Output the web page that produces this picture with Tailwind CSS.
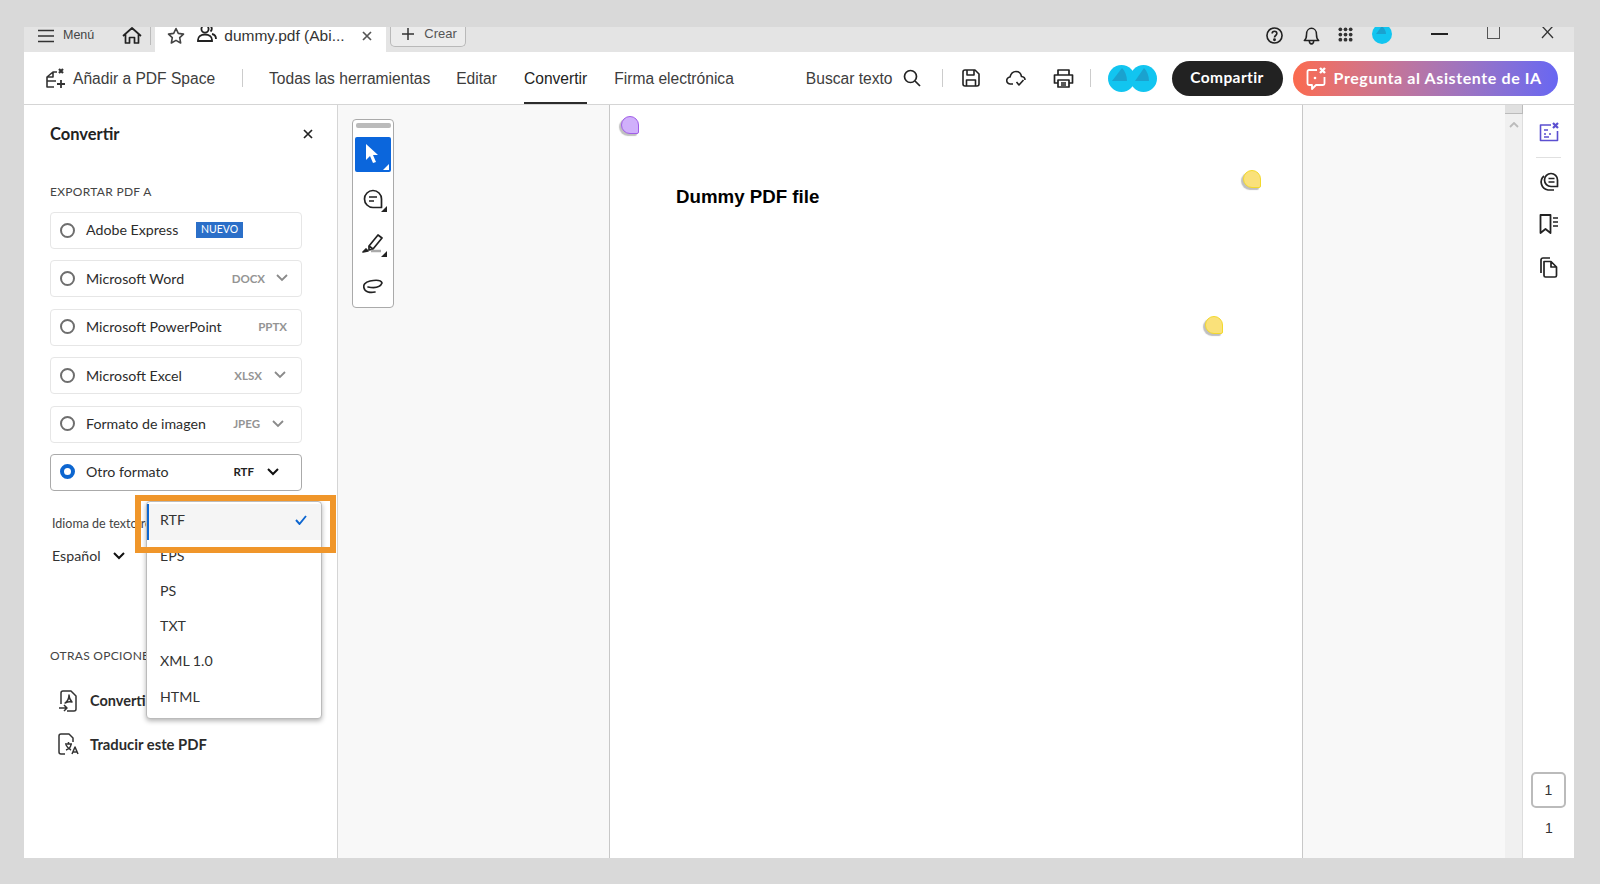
<!DOCTYPE html>
<html lang="es">
<head>
    <meta charset="UTF-8">
    <title>dummy.pdf - Convertir</title>
    <script src="https://cdn.jsdelivr.net/npm/@tailwindcss/browser@4"></script>
</head>
<body class="bg-[#d9d9d9] h-[884px] w-[1600px] overflow-hidden font-['Liberation_Sans',sans-serif] text-[#2c2c2c]">
    <div class="ml-[24px] mt-[27px] w-[1550px] h-[831px] flex flex-col bg-white absolute">

        <!-- Tab strip -->
        <div class="h-[25px] shrink-0 bg-[#e4e4e4] flex items-center overflow-hidden relative pb-[8px]">
            <svg class="ml-[14px] w-[16px] h-[14px]" viewBox="0 0 16 14" fill="none" stroke="#333" stroke-width="1.6"><path d="M0 1.5h16M0 7h16M0 12.5h16"/></svg>
            <span class="ml-[9px] text-[12.500px] text-[#444]">Menú</span>
            <svg class="ml-[28px] w-[20px] h-[19px]" viewBox="0 0 20 19" fill="none" stroke="#222" stroke-width="1.7" stroke-linejoin="round"><path d="M1 10 10 2l9 8M3.500 8.500V17H7.500v-5.500h5V17h4V8.500"/></svg>
            <div class="self-start ml-[8px] w-[1px] h-[18px] bg-[#bbb]"></div>
            <div class="self-start ml-[4px] w-[231px] h-[25px] pb-[8px] bg-white flex items-center">
                <svg class="ml-[12px] w-[18px] h-[18px]" viewBox="0 0 18 18" fill="none" stroke="#444" stroke-width="1.6" stroke-linejoin="round"><path d="m9 1.500 2.300 4.900 5.200.7-3.800 3.600.950 5.300L9 13.400l-4.650 2.600.950-5.300L1.500 7.100l5.200-.7z"/></svg>
                <svg class="ml-[12px] w-[20px] h-[20px] -mt-[3px]" viewBox="0 0 20 20" fill="none" stroke="#222" stroke-width="1.8"><circle cx="8" cy="5" r="3.600"/><path d="M1 16c0-3.500 3-5.500 7-5.500s7 2 7 5.500v1H1zM13 2c2 .5 2.500 4 .5 5.500M15 10c2.500.5 4 2 4 5"/></svg>
                <span class="ml-[7px] text-[15.500px] text-[#333] whitespace-nowrap">dummy.pdf (Abi...</span>
                <svg class="ml-[17px] w-[10px] h-[10px]" viewBox="0 0 10 10" stroke="#555" stroke-width="1.700"><path d="m1 1 8 8M9 1 1 9"/></svg>
            </div>
            <div class="self-start ml-[4px] w-[76px] h-[20px] pb-[5px] border border-t-0 border-[#b9b9b9] rounded-b-[5px] flex items-center bg-[#ececec]">
                <svg class="ml-[11px] w-[12px] h-[12px]" viewBox="0 0 12 12" stroke="#333" stroke-width="1.500"><path d="M6 0v12M0 6h12"/></svg>
                <span class="ml-[10px] text-[13px] text-[#555]">Crear</span>
            </div>
            <div class="self-start ml-auto relative h-[25px] w-[330px]">
                <svg class="absolute left-[22px] top-0 w-[17px] h-[17px]" viewBox="0 0 18 18" fill="none" stroke="#222" stroke-width="1.700"><circle cx="9" cy="9" r="8"/><path d="M6.500 7c0-3.300 5-3.300 5 0 0 2-2.500 2-2.500 4"/><circle cx="9" cy="13.500" r=".7" fill="#222"/></svg>
                <svg class="absolute left-[59px] top-0 w-[17px] h-[18px]" viewBox="0 0 18 20" fill="none" stroke="#222" stroke-width="1.700" stroke-linejoin="round"><path d="M1 15c2-1.500 2.500-3 2.500-7S6 1.500 9 1.500 14.500 4 14.500 8 15 13.500 17 15zM6.500 15c0 5 5 5 5 0"/></svg>
                <svg class="absolute left-[94px] top-0 w-[15px] h-[15px]" viewBox="0 0 16 16" fill="#333"><circle cx="2.500" cy="2.500" r="2"/><circle cx="8" cy="2.500" r="2"/><circle cx="13.500" cy="2.500" r="2"/><circle cx="2.500" cy="8" r="2"/><circle cx="8" cy="8" r="2"/><circle cx="13.500" cy="8" r="2"/><circle cx="2.500" cy="13.500" r="2"/><circle cx="8" cy="13.500" r="2"/><circle cx="13.500" cy="13.500" r="2"/></svg>
                <svg class="absolute left-[128px] -top-[3px] w-[20px] h-[20px]" viewBox="0 0 20 20"><circle cx="10" cy="10" r="10" fill="#12c5f0"/><path d="M4 10 10 2c2 2 4 5 4 8z" fill="#1aa2cf"/></svg>
                <div class="absolute left-[187px] top-[6px] w-[17px] h-[2px] bg-[#222]"></div>
                <div class="absolute left-[243px] top-0 w-[13px] h-[12px] border border-[#555] border-t-0"></div>
                <svg class="absolute left-[297px] -top-[1px] w-[13px] h-[13px]" viewBox="0 0 13 13" stroke="#333" stroke-width="1.300"><path d="m1 0 11 12M12 0 1 12"/></svg>
            </div>
        </div>

        <!-- Toolbar -->
        <div class="h-[53px] shrink-0 flex items-center border-b border-[#d5d5d5] relative text-[15.600px] text-[#3d3d3d]">
            <svg class="ml-[21px] w-[21px] h-[21px]" viewBox="0 0 21 21" fill="none" stroke="#333" stroke-width="1.600" stroke-linejoin="round"><path d="M9 19H2V9l6-5h4M2 13h9M8 4v5H2"/><path d="m14 1 4 4M18 1l-4 4" stroke-width="2.200"/><path d="M16 12v8M12 16h8" stroke-width="1.800"/></svg>
            <span class="ml-[7px] w-[169px] pt-[1px] whitespace-nowrap">Añadir a PDF Space</span>
            <div class="w-[1px] h-[18px] bg-[#ccc]"></div>
            <span class="ml-[26px] pt-[1px] whitespace-nowrap">Todas las herramientas</span>
            <span class="ml-[26px] pt-[1px]">Editar</span>
            <span class="ml-[27px] h-full flex items-center border-b-[2px] border-[#2c2c2c] pt-[3px] text-[#222]">Convertir</span>
            <span class="ml-[27px] pt-[1px] whitespace-nowrap">Firma electrónica</span>
            <span class="ml-[72px] pt-[1px] whitespace-nowrap">Buscar texto</span>
            <svg class="ml-[10px] w-[18px] h-[18px]" viewBox="0 0 18 18" fill="none" stroke="#222" stroke-width="1.700"><circle cx="7.500" cy="7.500" r="6"/><path d="m12 12 5 5"/></svg>
            <div class="ml-[21px] w-[1px] h-[18px] bg-[#ccc]"></div>
            <svg class="ml-[19px] w-[18px] h-[18px]" viewBox="0 0 18 18" fill="none" stroke="#222" stroke-width="1.600" stroke-linejoin="round"><path d="M3 1h10l4 4v10a2 2 0 0 1-2 2H3a2 2 0 0 1-2-2V3a2 2 0 0 1 2-2z"/><path d="M5 1v5h7V1M4.500 17v-6h9v6"/></svg>
            <svg class="ml-[26px] w-[20px] h-[17px]" viewBox="0 0 20 17" fill="none" stroke="#222" stroke-width="1.600" stroke-linejoin="round"><path d="M7 14H4.500a3.500 3.500 0 0 1-.5-7C5 3 7.500 1.500 10 1.500c3 0 5 2 5.500 5 2 .2 3.500 1.500 3.500 3.500"/><path d="m10.500 12 2.500 3 4.500-5"/></svg>
            <svg class="ml-[27px] w-[21px] h-[19px]" viewBox="0 0 21 19" fill="none" stroke="#222" stroke-width="1.700" stroke-linejoin="round"><path d="M5 6V1h11v5M5 14H1.500V6h18v8H16M5 11h11v7H5zM8 14h5M8 16h5"/></svg>
            <div class="ml-[16px] w-[1px] h-[18px] bg-[#ccc]"></div>
            <div class="ml-[17px] flex">
                <svg class="w-[27px] h-[27px]" viewBox="0 0 27 27"><circle cx="13.500" cy="13.500" r="13.500" fill="#12c5f0"/><path d="M4 16 14 3c3 3 5 8 5 13z" fill="#1aa2cf"/></svg>
                <svg class="w-[27px] h-[27px] -ml-[5px]" viewBox="0 0 27 27"><circle cx="13.500" cy="13.500" r="13.500" fill="#12c5f0"/><path d="M5 16 14 3c3 3 5 8 5 13z" fill="#1aa2cf"/></svg>
            </div>
            <div class="ml-[15px] w-[111px] h-[35px] rounded-full bg-[#222] text-white font-['Lato',sans-serif] font-bold text-[15.500px] tracking-[.4px] flex items-center justify-center pb-[1px]">Compartir</div>
            <div class="ml-[10px] w-[265px] h-[35px] rounded-full bg-gradient-to-r from-[#fb6a4d] to-[#6866f2] text-white font-['Lato',sans-serif] font-bold text-[16px] tracking-[.6px] flex items-center">
                <svg class="ml-[13px] w-[22px] h-[23px]" viewBox="0 0 22 23" fill="none" stroke="#fff" stroke-width="1.800" stroke-linejoin="round"><path d="M11 3H3a1.500 1.500 0 0 0-1.500 1.500v12A1.500 1.500 0 0 0 3 18h3v4l4-4h7a1.500 1.500 0 0 0 1.500-1.500V10"/><path d="m14 1 5 5M19 1l-5 5" stroke-width="2.400"/><circle cx="9" cy="11" r="1.300" fill="#fff" stroke="none"/></svg>
                <span class="ml-[6px] whitespace-nowrap">Pregunta al Asistente de IA</span>
            </div>
        </div>

        <div class="flex-1 flex min-h-0">
            <!-- Convert panel -->
            <aside class="w-[314px] shrink-0 border-r border-[#d5d5d5] relative font-['Lato',sans-serif] text-[14.200px] px-[26px] text-[#2c2c2c]">
                <div class="h-[58px] flex items-center justify-between">
                    <span class="font-bold text-[16.500px] text-[#222]">Convertir</span>
                    <svg class="mr-[-2px] w-[10px] h-[10px]" viewBox="0 0 10 10" stroke="#222" stroke-width="1.700"><path d="m1 1 8 8M9 1 1 9"/></svg>
                </div>
                <div class="mt-[20px] text-[12px] tracking-[.3px] text-[#444] h-[18px] flex items-center">EXPORTAR PDF A</div>
                <div class="mt-[11px] w-[252px] flex flex-col gap-[11.400px]">
                    <div class="h-[37px] pb-[1px] border border-[#e6e6e6] rounded-[4px] flex items-center">
                        <div class="ml-[9px] w-[15px] h-[15px] rounded-full border-2 border-[#6e6e6e]"></div>
                        <span class="ml-[11px]">Adobe Express</span>
                        <span class="ml-auto mr-[58px] w-[47px] h-[16px] bg-[#2b6fc8] text-white text-[10.500px] flex items-center justify-center">NUEVO</span>
                    </div>
                    <div class="h-[37px] pb-[1px] border border-[#e6e6e6] rounded-[4px] flex items-center">
                        <div class="ml-[9px] w-[15px] h-[15px] rounded-full border-2 border-[#6e6e6e]"></div>
                        <span class="ml-[11px]">Microsoft Word</span>
                        <span class="ml-auto text-[11.500px] font-bold text-[#949494]">DOCX</span>
                        <svg class="ml-[11px] mr-[13px] w-[12px] h-[8px]" viewBox="0 0 12 8" fill="none" stroke="#8a8a8a" stroke-width="1.800"><path d="m1 1 5 5 5-5"/></svg>
                    </div>
                    <div class="h-[37px] pb-[1px] border border-[#e6e6e6] rounded-[4px] flex items-center">
                        <div class="ml-[9px] w-[15px] h-[15px] rounded-full border-2 border-[#6e6e6e]"></div>
                        <span class="ml-[11px]">Microsoft PowerPoint</span>
                        <span class="ml-auto mr-[14px] text-[11.500px] font-bold text-[#949494]">PPTX</span>
                    </div>
                    <div class="h-[37px] pb-[1px] border border-[#e6e6e6] rounded-[4px] flex items-center">
                        <div class="ml-[9px] w-[15px] h-[15px] rounded-full border-2 border-[#6e6e6e]"></div>
                        <span class="ml-[11px]">Microsoft Excel</span>
                        <span class="ml-auto text-[11.500px] font-bold text-[#949494]">XLSX</span>
                        <svg class="ml-[12px] mr-[15px] w-[12px] h-[8px]" viewBox="0 0 12 8" fill="none" stroke="#8a8a8a" stroke-width="1.800"><path d="m1 1 5 5 5-5"/></svg>
                    </div>
                    <div class="h-[37px] pb-[1px] border border-[#e6e6e6] rounded-[4px] flex items-center">
                        <div class="ml-[9px] w-[15px] h-[15px] rounded-full border-2 border-[#6e6e6e]"></div>
                        <span class="ml-[11px]">Formato de imagen</span>
                        <span class="ml-auto text-[11.500px] font-bold text-[#949494]">JPEG</span>
                        <svg class="ml-[12px] mr-[17px] w-[12px] h-[8px]" viewBox="0 0 12 8" fill="none" stroke="#8a8a8a" stroke-width="1.800"><path d="m1 1 5 5 5-5"/></svg>
                    </div>
                    <div class="h-[37px] pb-[1px] border border-[#aaa] rounded-[4px] flex items-center">
                        <div class="ml-[9px] w-[15px] h-[15px] rounded-full border-[4px] border-[#0d66d0]"></div>
                        <span class="ml-[11px]">Otro formato</span>
                        <span class="ml-auto text-[11.500px] font-bold text-[#222]">RTF</span>
                        <svg class="ml-[13px] mr-[22px] w-[12px] h-[8px]" viewBox="0 0 12 8" fill="none" stroke="#111" stroke-width="2"><path d="m1 1 5 5 5-5"/></svg>
                    </div>
                </div>
                <div class="mt-[24px] ml-[2px] text-[12.500px] text-[#444] h-[18px] flex items-center whitespace-nowrap">Idioma de texto reconocido</div>
                <div class="mt-[13px] ml-[2px] flex items-center h-[20px]">
                    <span class="text-[#333]">Español</span>
                    <svg class="ml-[12px] w-[12px] h-[8px]" viewBox="0 0 12 8" fill="none" stroke="#111" stroke-width="2"><path d="m1 1 5 5 5-5"/></svg>
                </div>
                <div class="mt-[81px] text-[12px] tracking-[.3px] text-[#444] h-[18px] flex items-center whitespace-nowrap">OTRAS OPCIONES DE CONVERSIÓN</div>
                <div class="mt-[25px] ml-[8px] h-[22px] flex items-center font-bold text-[14.500px]">
                    <svg class="w-[20px] h-[22px]" viewBox="0 0 20 22" fill="none" stroke="#333" stroke-width="1.500" stroke-linejoin="round"><path d="M3 14V3a2 2 0 0 1 2-2h8l5 5v13a2 2 0 0 1-2 2H9M1 18h8M6 15l3 3-3 3M7 13c3-2 4-4 4-8 0 3 1 5 3 7-2-.500-5 0-7 1z"/></svg>
                    <span class="ml-[12px] whitespace-nowrap">Convertir a PDF</span>
                </div>
                <div class="mt-[21px] ml-[8px] h-[22px] flex items-center font-bold text-[14.800px]">
                    <svg class="w-[22px] h-[22px]" viewBox="0 0 22 22" fill="none" stroke="#333" stroke-width="1.500" stroke-linejoin="round"><path d="M7 21H3a2 2 0 0 1-2-2V3a2 2 0 0 1 2-2h8l4 4v4M7 11h7M10.500 9v2M8 17c3-1 5-3 5-6M8 12c1 2 3 4 5 5M14 21l3-7 3 7M15 19h4"/></svg>
                    <span class="ml-[10px] whitespace-nowrap">Traducir este PDF</span>
                </div>

                <!-- Format dropdown -->
                <div class="absolute left-[122px] top-[396px] w-[176px] h-[218px] bg-white border border-[#bbb] rounded-[4px] shadow-[0_2px_5px_rgba(0,0,0,.3)] pt-[2px] text-[#333]">
                    <div class="h-[36px] pb-[5px] bg-[#f5f5f5] border-l-[2px] border-[#0d66d0] flex items-center pl-[11px] justify-between pr-[14px]">
                        <span>RTF</span>
                        <svg class="w-[12px] h-[10px]" viewBox="0 0 12 10" fill="none" stroke="#0d66d0" stroke-width="1.900"><path d="m1 5 3.500 4L11 1"/></svg>
                    </div>
                    <div class="h-[35.300px] pb-[5px] flex items-center pl-[13px]">EPS</div>
                    <div class="h-[35.300px] pb-[5px] flex items-center pl-[13px]">PS</div>
                    <div class="h-[35.300px] pb-[5px] flex items-center pl-[13px]">TXT</div>
                    <div class="h-[35.300px] pb-[5px] flex items-center pl-[13px]">XML 1.0</div>
                    <div class="h-[35.300px] pb-[5px] flex items-center pl-[13px]">HTML</div>
                </div>
                <!-- Orange callout -->
                <div class="absolute left-[111px] top-[390px] w-[201px] h-[58px] border-[6px] border-[#f0962a]"></div>
            </aside>

            <!-- Canvas -->
            <main class="flex-1 flex bg-[#f8f8f8] relative min-w-0">
                <div class="w-[272px] shrink-0 pl-[14px] pt-[14px] border-r border-[#c8c8c8]">
                    <div class="w-[42px] h-[189px] bg-white border border-[#aaa] rounded-[4px] flex flex-col items-center">
                        <div class="mt-[3px] w-[35px] h-[5px] rounded-[2px] bg-[#bbb]"></div>
                        <div class="mt-[9px] w-[36px] h-[35px] rounded-[2px] bg-[#0b66dc] relative flex items-center justify-center">
                            <svg class="w-[14px] h-[21px] -mt-[2px] -ml-[2px]" viewBox="0 0 14 21" fill="#fff"><path d="M1 1v16l4-4 3 7 3-1-3-7h5z"/></svg>
                            <div class="absolute right-[2px] bottom-[2px] w-0 h-0 border-l-[6px] border-l-transparent border-b-[6px] border-b-white"></div>
                        </div>
                        <div class="mt-[9px] w-[36px] h-[36px] relative flex items-center justify-center">
                            <svg class="w-[20px] h-[20px]" viewBox="0 0 20 20" fill="none" stroke="#222" stroke-width="1.700" stroke-linejoin="round"><path d="M10 1.500a8.500 8.500 0 1 0 0 17h8.500V10A8.500 8.500 0 0 0 10 1.500z"/><path d="M6 8h8M6 12h5"/></svg>
                            <div class="absolute right-[4px] bottom-[5px] w-0 h-0 border-l-[6px] border-l-transparent border-b-[6px] border-b-[#222]"></div>
                        </div>
                        <div class="mt-[9px] w-[36px] h-[36px] relative flex items-center justify-center">
                            <svg class="w-[22px] h-[20px]" viewBox="0 0 22 20" fill="none" stroke="#222" stroke-width="1.700" stroke-linejoin="round"><path d="m7 12 9-11 4 3-9 11-4 1z"/><path d="M7 12l4 3" /><path d="M1 18l3-3 2 2z" fill="#222"/><path d="M9 17h10" stroke="#aaa" stroke-width="2.500"/></svg>
                            <div class="absolute right-[4px] bottom-[5px] w-0 h-0 border-l-[6px] border-l-transparent border-b-[6px] border-b-[#222]"></div>
                        </div>
                        <div class="mt-[6px] w-[36px] h-[36px] flex items-center justify-center">
                            <svg class="w-[20px] h-[15px]" viewBox="0 0 20 15" fill="none" stroke="#222" stroke-width="1.700" stroke-linecap="round"><path d="M19 4c-1-3-7-3-12-2C2 3 0 6 1 9c1 4 6 5 11 4M5 8c5 1 12 1 14-4"/></svg>
                        </div>
                    </div>
                </div>

                <!-- Page -->
                <div class="w-[693px] shrink-0 bg-white border-r border-[#c8c8c8] relative">
                    <p class="absolute left-[66px] top-[81px] text-[18.700px] font-bold text-black leading-[22px] whitespace-nowrap">Dummy PDF file</p>
                    <div class="absolute left-[11px] top-[11px] w-[18px] h-[18px] rounded-[50%_50%_2px_50%] bg-[#d0b0fb] border-[1.500px] border-[#a15ee8] shadow-[-2px_2px_1px_rgba(0,0,0,.25)]"></div>
                    <div class="absolute left-[633px] top-[65px] w-[18px] h-[18px] rounded-[50%_50%_2px_50%] bg-[#fae17a] border-[1.500px] border-[#f3d92c] shadow-[-2px_2px_1px_rgba(0,0,0,.25)]"></div>
                    <div class="absolute left-[595px] top-[211px] w-[18px] h-[18px] rounded-[50%_50%_2px_50%] bg-[#fae17a] border-[1.500px] border-[#f3d92c] shadow-[-2px_2px_1px_rgba(0,0,0,.25)]"></div>
                </div>

                <div class="flex-1"></div>

                <!-- Scrollbar -->
                <div class="w-[18px] shrink-0 bg-[#f0f0f0] border-r border-[#ddd] flex flex-col items-center">
                    <div class="w-[18px] h-[9px] bg-[#e0e0e0] border-b border-r border-[#bbb]"></div>
                    <svg class="mt-[8px] w-[10px] h-[6px]" viewBox="0 0 10 6" fill="none" stroke="#bbb" stroke-width="1.800"><path d="m1 5 4-4 4 4"/></svg>
                </div>

                <!-- Right rail -->
                <div class="w-[51px] shrink-0 bg-white flex flex-col items-center relative">
                    <svg class="mt-[17px] w-[20px] h-[20px]" viewBox="0 0 20 20" fill="none" stroke="#5b4fd0" stroke-width="1.600" stroke-linejoin="round"><path d="M12 3H1.500v15.500h17V9"/><path d="M5 8h4M5 12h2M5 15h5M10 12h2" /><path d="m14 1 5 5M19 1l-5 5" stroke-width="2.200"/></svg>
                    <div class="mt-[15px] w-[25px] h-[1px] bg-[#e0e0e0]"></div>
                    <svg class="mt-[14px] w-[20px] h-[20px]" viewBox="0 0 20 20" fill="none" stroke="#222" stroke-width="1.700" stroke-linejoin="round"><path d="M12 1.500a6.500 6.500 0 1 0 0 13h6.500V8A6.500 6.500 0 0 0 12 1.500zM9.500 6.500h6M9.500 10h6"/><path d="M5 4a8 8 0 0 0 4 14h6"/></svg>
                    <svg class="mt-[22px] w-[20px] h-[20px]" viewBox="0 0 20 20" fill="none" stroke="#222" stroke-width="1.800" stroke-linejoin="round"><path d="M1.500 1h10v18l-5-4-5 4z"/><path d="M14 4h5M14 8h5M14 12h5" stroke-width="1.500"/></svg>
                    <svg class="mt-[23px] w-[19px] h-[21px]" viewBox="0 0 19 21" fill="none" stroke="#222" stroke-width="1.700" stroke-linejoin="round"><path d="M5 4.500h7l5.500 5.500v8.500a1.500 1.500 0 0 1-1.500 1.500H6.500A1.500 1.500 0 0 1 5 18.500zM12 4.500V10h5.500"/><path d="M2 16V3a2 2 0 0 1 2-2h7"/></svg>
                    <div class="absolute left-[8px] top-[667px] w-[35px] h-[36px] border-2 border-[#bbb] rounded-[5px] flex items-center justify-center text-[14px] text-[#333]">1</div>
                    <span class="absolute left-[22px] top-[713px] text-[14px] text-[#333]">1</span>
                </div>
            </main>
        </div>
    </div>
</body>
</html>
